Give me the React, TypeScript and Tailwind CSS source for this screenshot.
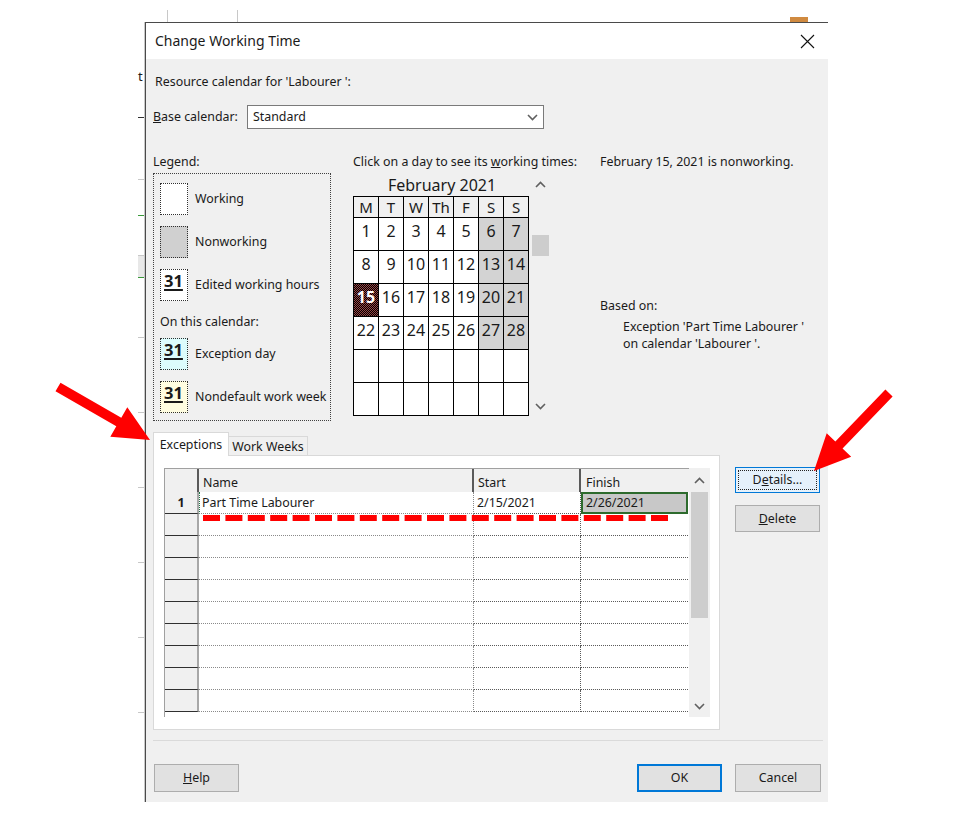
import React from "react";

// arrow polygon from tail to tip
function arrowPoints(tx: number, ty: number, hx: number, hy: number, shaft: number, headLen: number, headHalf: number) {
  const dx = hx - tx;
  const dy = hy - ty;
  const len = Math.sqrt(dx * dx + dy * dy);
  const ux = dx / len;
  const uy = dy / len;
  const px = -uy;
  const py = ux;
  const bx = hx - ux * headLen;
  const by = hy - uy * headLen;
  const s = shaft / 2;
  const pts = [
    [tx + px * s, ty + py * s],
    [bx + px * s, by + py * s],
    [bx + px * headHalf, by + py * headHalf],
    [hx, hy],
    [bx - px * headHalf, by - py * headHalf],
    [bx - px * s, by - py * s],
    [tx - px * s, ty - py * s],
  ];
  return pts.map((p) => p.join(",")).join(" ");
}

function ChevronUp() {
  return (
    <svg width="11" height="7" viewBox="0 0 11 7">
      <polyline points="1,6 5.5,1.5 10,6" fill="none" stroke="#606060" strokeWidth="1.6" />
    </svg>
  );
}

function ChevronDown() {
  return (
    <svg width="11" height="7" viewBox="0 0 11 7">
      <polyline points="1,1 5.5,5.5 10,1" fill="none" stroke="#606060" strokeWidth="1.6" />
    </svg>
  );
}

const weeks: (number | null)[][] = [
  [1, 2, 3, 4, 5, 6, 7],
  [8, 9, 10, 11, 12, 13, 14],
  [15, 16, 17, 18, 19, 20, 21],
  [22, 23, 24, 25, 26, 27, 28],
  [null, null, null, null, null, null, null],
  [null, null, null, null, null, null, null],
];

const dayHeads = ["M", "T", "W", "Th", "F", "S", "S"];

function Swatch({ kind }: { kind: "work" | "non" | "edit" | "exc" | "week" }) {
  const bg =
    kind === "non"
      ? "bg-[#d0d0d0]"
      : kind === "exc"
      ? "bg-[#dcfcfc]"
      : kind === "week"
      ? "bg-[#fffde0]"
      : "bg-white";
  return (
    <div className={`w-[28px] h-[32px] border border-dotted border-[#303030] ${bg}`}>
      {kind !== "work" && kind !== "non" && (
        <div className="pl-[3px] pt-[2px] text-[16.5px] leading-[18px] font-bold underline decoration-2 underline-offset-2">
          31
        </div>
      )}
    </div>
  );
}

function LegendRow({ kind, label }: { kind: "work" | "non" | "edit" | "exc" | "week"; label: string }) {
  return (
    <div className="flex items-center">
      <Swatch kind={kind} />
      <span className="ml-[7px]">{label}</span>
    </div>
  );
}

function Calendar() {
  return (
    <div className="flex">
      <div className="w-[178px]">
        <div className="h-[26px] flex items-center justify-center text-[16px] leading-none pt-[3px]">
          February 2021
        </div>
        <div className="grid grid-cols-[repeat(7,24px)] gap-px bg-black border border-black w-[176px]">
          {dayHeads.map((d, i) => (
            <div key={i} className="h-[20px] bg-[#f0f0f0] flex items-center justify-center text-[15px] leading-none">
              {d}
            </div>
          ))}
          {weeks.map((w, wi) =>
            w.map((d, di) => {
              const weekend = di >= 5 && d !== null;
              const selected = d === 15;
              return (
                <div
                  key={`${wi}-${di}`}
                  className={`h-[32px] flex justify-center pt-[4px] text-[16px] leading-[18px] ${
                    selected
                      ? "bg-[repeating-conic-gradient(#000_0_25%,#9a4444_0_50%)] bg-[length:2px_2px] text-white font-bold"
                      : weekend
                      ? "bg-[#d3d3d3]"
                      : "bg-white"
                  }`}
                >
                  {d ?? ""}
                </div>
              );
            })
          )}
        </div>
      </div>
      <div className="w-[19px] mt-[3px] h-[244px] flex flex-col items-center">
        <div className="h-[22px] flex items-center">
          <ChevronUp />
        </div>
        <div className="mt-[40px] w-[17px] h-[21px] bg-[#cdcdcd]" />
        <div className="flex-1" />
        <div className="h-[22px] flex items-center">
          <ChevronDown />
        </div>
      </div>
    </div>
  );
}

function ExceptionsTable() {
  const rows = Array.from({ length: 10 }, (_, i) => i);
  return (
    <div className="flex w-[546px] h-[249px] overflow-hidden">
      <div className="w-[525px] border-l border-t border-[#a0a0a0]">
        <div className="flex h-[23px] bg-[#f0f0f0]">
          <div className="w-[34px] border-r-2 border-[#5a5a5a]" />
          <div className="w-[275px] border-r-2 border-[#5a5a5a] flex items-end pl-[4px] pb-[1px]">Name</div>
          <div className="w-[107px] border-r-2 border-[#5a5a5a] flex items-end pl-[4px] pb-[1px]">Start</div>
          <div className="w-[107px] flex items-end pl-[5px] pb-[1px]">Finish</div>
        </div>
        {rows.map((r) => (
          <div key={r} className="flex h-[22px]">
            <div className="w-[34px] bg-[#f0f0f0] border-r-2 border-b border-r-[#a8a8a8] border-b-[#303030] flex items-center justify-center font-bold">
              {r === 0 ? "1" : ""}
            </div>
            <div
              className={`w-[275px] border-b border-r border-dotted border-[#8a8a8a] flex items-center pl-[2px] ${
                r === 0 ? "border-l border-l-[#217346]" : ""
              }`}
            >
              {r === 0 ? "Part Time Labourer" : ""}
            </div>
            <div className="w-[107px] border-b border-r border-dotted border-[#5a5a5a] flex items-center pl-[3px]">
              {r === 0 ? "2/15/2021" : ""}
            </div>
            <div
              className={`w-[107px] flex items-center pl-[3px] ${
                r === 0
                  ? "bg-[#c8c8c8] border-2 border-[#2d6b2d]"
                  : "border-b border-dotted border-[#5a5a5a]"
              }`}
            >
              {r === 0 ? "2/26/2021" : ""}
            </div>
          </div>
        ))}
      </div>
      <div className="w-[21px] bg-[#f0f0f0] flex flex-col items-center">
        <div className="h-[24px] flex items-center">
          <ChevronUp />
        </div>
        <div className="w-[17px] h-[126px] bg-[#cdcdcd]" />
        <div className="flex-1" />
        <div className="h-[22px] flex items-center">
          <ChevronDown />
        </div>
      </div>
    </div>
  );
}

export default function App() {
  return (
    <div className="relative w-[963px] h-[822px] bg-white overflow-hidden font-['Noto_Sans',sans-serif] text-[12.4px] leading-[16px] text-[#1a1a1a]">
      {/* application window behind the dialog */}
      <div className="ml-[138px] mt-[10px] w-[690px] h-[792px] flex flex-col">
        <div className="h-[12px] flex">
          <div className="w-[30px] border-r border-[#c8c8c8]" />
          <div className="w-[70px] border-r border-[#c8c8c8]" />
          <div className="flex-1" />
          <div className="w-[18px] h-[5px] mt-[7px] bg-[#d08a40] mr-[20px]" />
        </div>
        <div className="flex flex-1">
          <div className="w-[7px] flex flex-col border-r border-[#c8c8c8]">
            <div className="h-[56px] pt-[48px] text-[13px] leading-none">t</div>
            <div className="h-[40px] border-b border-[#303030]" />
            <div className="h-[62px] border-b border-[#c8c8c8]" />
            <div className="h-[36px] border-b border-[#3a9a3a]" />
            <div className="h-[40px] border-b border-[#c8c8c8]" />
            <div className="h-[22px] bg-[#e8e8e8] border-b border-[#3a9a3a]" />
            <div className="h-[60px] border-b border-[#c8c8c8]" />
            <div className="h-[75px] border-b border-[#c8c8c8]" />
            <div className="h-[75px] border-b border-[#c8c8c8]" />
            <div className="h-[75px] border-b border-[#c8c8c8]" />
            <div className="h-[75px] border-b border-[#c8c8c8]" />
            <div className="h-[75px] border-b border-[#c8c8c8]" />
          </div>

          {/* dialog */}
          <div className="w-[683px] h-[780px] border-l border-t border-[#4a4a4a] flex flex-col">
            <div className="h-[36px] bg-white flex items-center justify-between pl-[9px] pr-[13px]">
              <span className="text-[14px]">Change Working Time</span>
              <svg width="15" height="15" viewBox="0 0 15 15">
                <path d="M1 1 L14 14 M14 1 L1 14" stroke="#111" strokeWidth="1.1" />
              </svg>
            </div>
            <div className="flex-1 bg-[#f0f0f0] pl-[7px] pr-[5px] flex flex-col">
              <div className="pt-[15px] pl-[2px]">Resource calendar for 'Labourer ':</div>

              <div className="mt-[15px] flex items-center h-[24px]">
                <span>
                  <span className="underline">B</span>ase calendar:
                </span>
                <div className="ml-[9px] w-[297px] h-[24px] bg-white border border-[#7a7a7a] flex items-center justify-between pl-[5px] pr-[5px]">
                  <span>Standard</span>
                  <ChevronDown />
                </div>
              </div>

              <div className="mt-[25px] flex">
                <div className="w-[178px]">
                  <div>Legend:</div>
                  <div className="mt-[3px] h-[248px] border border-dotted border-[#404040] pl-[6px] pt-[9px] flex flex-col">
                    <LegendRow kind="work" label="Working" />
                    <div className="mt-[11px]">
                      <LegendRow kind="non" label="Nonworking" />
                    </div>
                    <div className="mt-[11px]">
                      <LegendRow kind="edit" label="Edited working hours" />
                    </div>
                    <div className="mt-[13px]">On this calendar:</div>
                    <div className="mt-[8px]">
                      <LegendRow kind="exc" label="Exception day" />
                    </div>
                    <div className="mt-[11px]">
                      <LegendRow kind="week" label="Nondefault work week" />
                    </div>
                  </div>
                </div>

                <div className="ml-[22px] w-[226px]">
                  <div className="whitespace-nowrap">
                    Click on a day to see its <span className="underline">w</span>orking times:
                  </div>
                  <Calendar />
                </div>

                <div className="ml-[21px]">
                  <div>February 15, 2021 is nonworking.</div>
                  <div className="mt-[128px]">Based on:</div>
                  <div className="mt-[5px] pl-[23px]">
                    <div>Exception 'Part Time Labourer '</div>
                    <div className="mt-[1px]">on calendar 'Labourer '.</div>
                  </div>
                </div>
              </div>

              <div className="mt-[11px] flex">
                <div className="w-[567px]">
                  <div className="h-[23px] flex items-end">
                    <div className="relative z-10 mb-[-1px] w-[76px] h-[24px] bg-white border border-b-0 border-[#d9d9d9] flex items-center justify-center">
                      Exceptions
                    </div>
                    <div className="w-[79px] h-[19px] bg-[#f0f0f0] border border-b-0 border-l-0 border-[#d9d9d9] flex items-center justify-center pt-[1px]">
                      Work Weeks
                    </div>
                  </div>
                  <div className="h-[275px] bg-white border border-[#d9d9d9] pl-[10px] pt-[12px]">
                    <ExceptionsTable />
                  </div>
                </div>
                <div className="ml-[15px] pt-[35px] flex flex-col">
                  <div className="w-[85px] h-[26px] bg-[#e5f1fb] border border-[#0078d7] p-[2px]">
                    <div className="h-full border border-dotted border-[#222] flex items-center justify-center">
                      <span>
                        D<span className="underline">e</span>tails...
                      </span>
                    </div>
                  </div>
                  <div className="mt-[12px] w-[85px] h-[27px] bg-[#e1e1e1] border border-[#adadad] flex items-center justify-center">
                    <span>
                      <span className="underline">D</span>elete
                    </span>
                  </div>
                </div>
              </div>

              <div className="mt-[10px] h-px bg-[#dadada]" />

              <div className="mt-[23px] flex items-center">
                <div className="ml-[1px] w-[85px] h-[28px] bg-[#e1e1e1] border border-[#adadad] flex items-center justify-center">
                  <span>
                    <span className="underline">H</span>elp
                  </span>
                </div>
                <div className="flex-1" />
                <div className="w-[85px] h-[28px] bg-[#e1e1e1] border-2 border-[#0078d7] flex items-center justify-center">
                  OK
                </div>
                <div className="ml-[13px] mr-[2px] w-[86px] h-[28px] bg-[#e1e1e1] border border-[#adadad] flex items-center justify-center">
                  Cancel
                </div>
              </div>
            </div>
          </div>
        </div>
      </div>

      {/* annotations drawn on top of the screenshot */}
      <svg className="absolute left-0 top-0 pointer-events-none" width="963" height="822">
        <line x1="203" y1="518" x2="670" y2="518" stroke="#ff0000" strokeWidth="6" strokeDasharray="17 5.4" />
        <polygon points={arrowPoints(58, 387, 150, 440, 10, 36, 17)} fill="#ff0000" />
        <polygon points={arrowPoints(889, 393, 814, 471, 10, 36, 17)} fill="#ff0000" />
      </svg>
    </div>
  );
}
